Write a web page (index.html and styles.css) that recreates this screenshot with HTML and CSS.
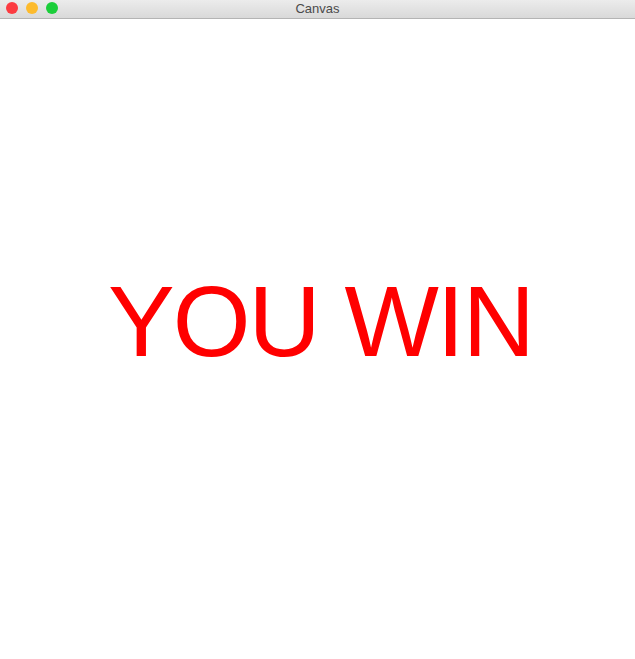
FILE: index.html
```html
<!DOCTYPE html>
<html>
<head>
<meta charset="utf-8">
<link rel="stylesheet" href="styles.css">
</head>
<body>
<div class="window">
  <div class="titlebar">
    <div class="lights">
      <span class="light red"></span>
      <span class="light yellow"></span>
      <span class="light green"></span>
    </div>
    <div class="title">Canvas</div>
  </div>
  <div class="canvas">
    <div class="message">YOU WIN</div>
  </div>
</div>
</body>
</html>
```

FILE: styles.css
```css
html, body {
  margin: 0;
  padding: 0;
  background: #ffffff;
}
.window {
  width: 635px;
  height: 659px;
  display: flex;
  flex-direction: column;
  overflow: hidden;
}
.titlebar {
  position: relative;
  height: 18px;
  flex: none;
  background: linear-gradient(#ececec, #d9d9d9);
  border-bottom: 1px solid #b4b4b4;
  display: flex;
  align-items: center;
  justify-content: center;
}
.lights {
  position: absolute;
  left: 6px;
  top: 2px;
  display: flex;
  gap: 8px;
}
.light {
  width: 12px;
  height: 12px;
  border-radius: 50%;
  display: block;
}
.red { background: #fc3b41; }
.yellow { background: #fdbb2d; }
.green { background: #1bce3a; }
.title {
  font-family: "Liberation Sans", Arial, sans-serif;
  font-size: 13px;
  color: #4a4a4a;
  line-height: 18px;
}
.canvas {
  flex: 1;
  position: relative;
  background: #ffffff;
}
.message {
  font-family: "Liberation Sans", Arial, sans-serif;
  font-size: 100px;
  color: #ff0000;
  line-height: 100px;
  letter-spacing: -2px;
  white-space: nowrap;
  padding-left: 108px;
  padding-top: 252px;
  -webkit-font-smoothing: none;
}
```
